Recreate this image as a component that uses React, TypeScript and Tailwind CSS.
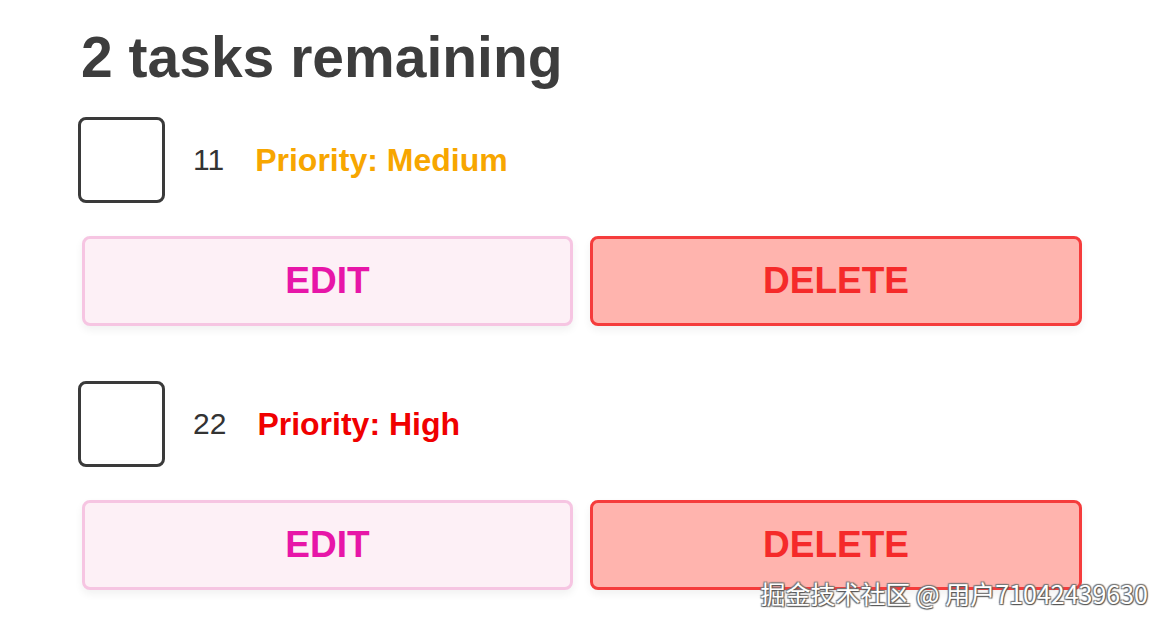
import React from 'react';

interface Task {
    id: number;
    name: string;
    priority: 'Medium' | 'High';
}

const tasks: Task[] = [
    { id: 1, name: '11', priority: 'Medium' },
    { id: 2, name: '22', priority: 'High' },
];

const priorityColors = {
    Medium: 'text-[#f7a600]',
    High: 'text-[#f00000]',
};

function TaskItem({ task }: { task: Task }) {
    return (
        <li className="flex flex-col">
            <div className="flex items-center">
                <div className="h-[86px] w-[87px] rounded-[8px] border-[3px] border-[#3a3a3a] bg-white" />
                <span className="ml-[28px] text-[30px] leading-none text-[#333]">{task.name}</span>
                <span className={`ml-[31px] text-[32px] font-bold leading-none ${priorityColors[task.priority]}`}>
                    Priority: {task.priority}
                </span>
            </div>
            <div className="ml-[4px] mt-[33px] flex gap-[17px]">
                <button className="flex h-[90px] w-[491px] items-center justify-center rounded-[8px] border-[3px] border-[#f6c5e2] bg-[#fdf0f6] text-[37px] font-bold text-[#e716a8] shadow-[0_4px_8px_rgba(0,0,0,0.06)]">
                    EDIT
                </button>
                <button className="flex h-[90px] w-[492px] items-center justify-center rounded-[8px] border-[3px] border-[#f53c3c] bg-[#ffb4ae] text-[37px] font-bold text-[#f52a2a] shadow-[0_4px_8px_rgba(0,0,0,0.06)]">
                    DELETE
                </button>
            </div>
        </li>
    );
}

export default function App() {
    return (
        <div className="relative h-[627px] w-[1167px] overflow-hidden bg-white font-['Liberation_Sans',Arial,sans-serif]">
            <div className="pl-[78px] pt-[25px]">
                <h1 className="pl-[3px] text-[57px] font-bold leading-[65px] text-[#3d3d3d]">2 tasks remaining</h1>
                <ul className="mt-[27px] flex flex-col gap-[55px]">
                    {tasks.map((task) => (
                        <TaskItem key={task.id} task={task} />
                    ))}
                </ul>
            </div>
            <div className="absolute right-[19px] top-[577px] font-['Noto_Sans_CJK_SC',sans-serif] text-[25px] leading-[32px] text-white [text-shadow:1px_1px_1px_#555,-1px_-1px_1px_#777,1px_-1px_1px_#777,-1px_1px_1px_#777]">
                掘金技术社区 @ 用户71042439630
            </div>
        </div>
    );
}
